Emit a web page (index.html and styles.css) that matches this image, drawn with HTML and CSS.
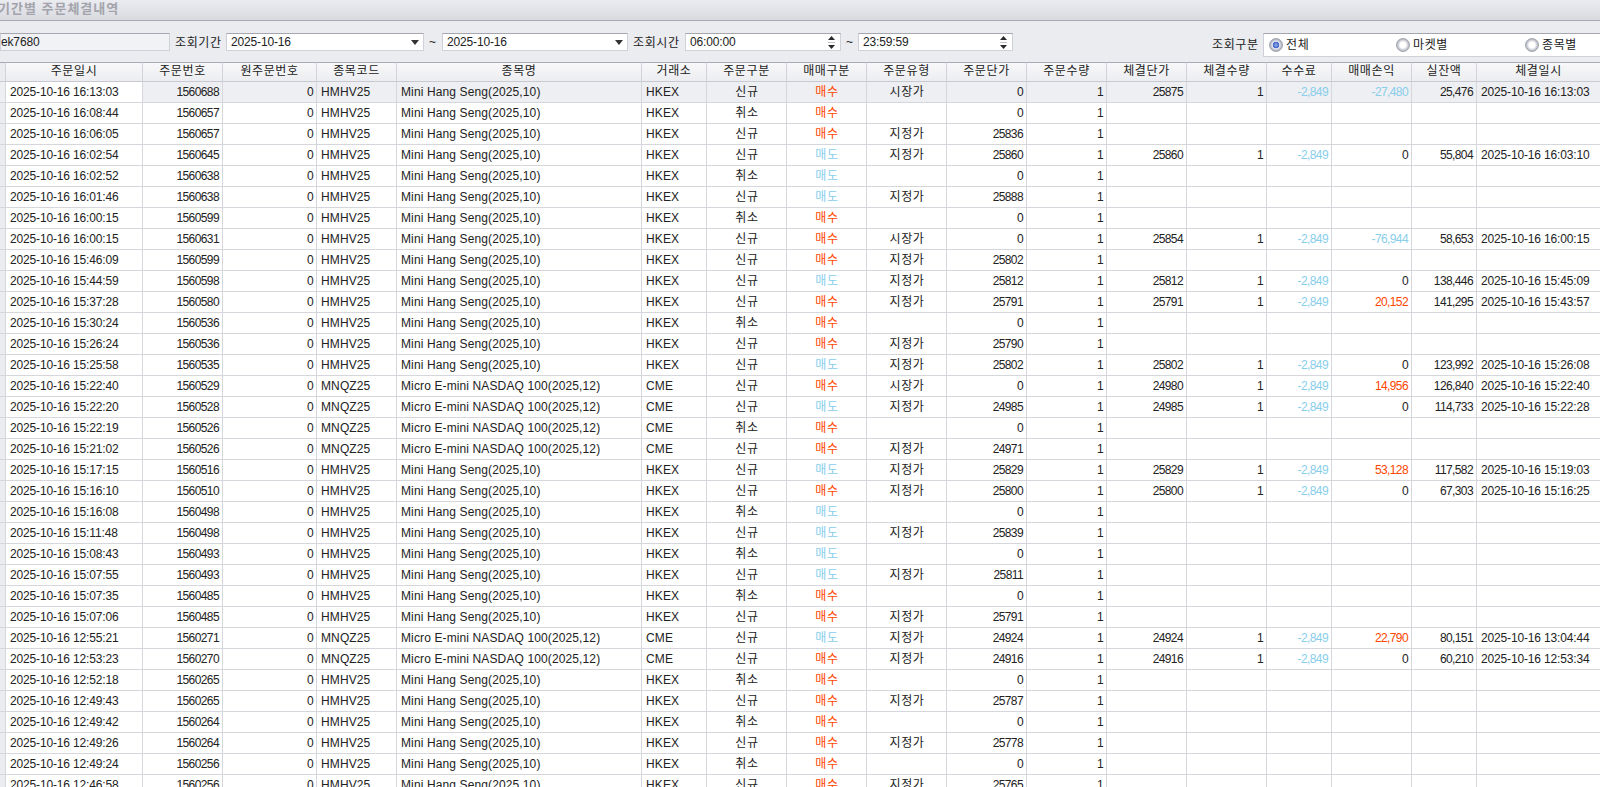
FILE: index.html
```html
<!DOCTYPE html>
<html lang="ko">

<head>
    <meta charset="UTF-8">
    <title>기간별 주문체결내역</title>
    <link rel="stylesheet" href="styles.css">
</head>

<body>
    <h1 class="title">기간별 주문체결내역</h1>

    <div class="bar">
        <div class="box account">ek7680</div>
        <span class="lbl">조회기간</span>
        <div class="box date-a">2025-10-16<i class="arrow"></i></div>
        <span class="tilde">~</span>
        <div class="box date-b">2025-10-16<i class="arrow"></i></div>
        <span class="lbl lbl-time">조회시간</span>
        <div class="box time">06:00:00<svg class="spin" viewBox="0 0 7 13"><path d="M3.5 0L7 4H0z"/><path class="spin-mid" d="M0 6h7v1H0z"/><path d="M0 9h7L3.5 13z"/></svg></div>
        <span class="tilde tilde-time">~</span>
        <div class="box time time-b">23:59:59<svg class="spin" viewBox="0 0 7 13"><path d="M3.5 0L7 4H0z"/><path class="spin-mid" d="M0 6h7v1H0z"/><path d="M0 9h7L3.5 13z"/></svg></div>
        <span class="lbl lbl-kind">조회구분</span>
        <div class="radios">
            <span class="opt opt-first"><i class="radio on"></i>전체</span>
            <span class="opt"><i class="radio"></i>마켓별</span>
            <span class="opt"><i class="radio"></i>종목별</span>
        </div>
    </div>

    <table class="grid">
        <colgroup>
            <col class="w6">
            <col class="w137">
            <col class="w80">
            <col class="w94">
            <col class="w80">
            <col class="w245">
            <col class="w65">
            <col class="w80">
            <col class="w80">
            <col class="w80">
            <col class="w80">
            <col class="w80">
            <col class="w80">
            <col class="w80">
            <col class="w65">
            <col class="w80">
            <col class="w65">
            <col class="w124">
        </colgroup>
        <thead>
            <tr><th></th><th>주문일시</th><th>주문번호</th><th>원주문번호</th><th>종목코드</th><th>종목명</th><th>거래소</th><th>주문구분</th><th>매매구분</th><th>주문유형</th><th>주문단가</th><th>주문수량</th><th>체결단가</th><th>체결수량</th><th>수수료</th><th>매매손익</th><th>실잔액</th><th>체결일시</th></tr>
        </thead>
        <tbody>
            <tr class="sel"><td></td><td class="focus">2025-10-16 16:13:03</td><td>1560688</td><td>0</td><td>HMHV25</td><td>Mini Hang Seng(2025,10)</td><td>HKEX</td><td>신규</td><td class="buy">매수</td><td>시장가</td><td>0</td><td>1</td><td>25875</td><td>1</td><td class="sell">-2,849</td><td class="sell">-27,480</td><td>25,476</td><td>2025-10-16 16:13:03</td></tr>
            <tr><td></td><td>2025-10-16 16:08:44</td><td>1560657</td><td>0</td><td>HMHV25</td><td>Mini Hang Seng(2025,10)</td><td>HKEX</td><td>취소</td><td class="buy">매수</td><td></td><td>0</td><td>1</td><td></td><td></td><td></td><td></td><td></td><td></td></tr>
            <tr><td></td><td>2025-10-16 16:06:05</td><td>1560657</td><td>0</td><td>HMHV25</td><td>Mini Hang Seng(2025,10)</td><td>HKEX</td><td>신규</td><td class="buy">매수</td><td>지정가</td><td>25836</td><td>1</td><td></td><td></td><td></td><td></td><td></td><td></td></tr>
            <tr><td></td><td>2025-10-16 16:02:54</td><td>1560645</td><td>0</td><td>HMHV25</td><td>Mini Hang Seng(2025,10)</td><td>HKEX</td><td>신규</td><td class="sell">매도</td><td>지정가</td><td>25860</td><td>1</td><td>25860</td><td>1</td><td class="sell">-2,849</td><td>0</td><td>55,804</td><td>2025-10-16 16:03:10</td></tr>
            <tr><td></td><td>2025-10-16 16:02:52</td><td>1560638</td><td>0</td><td>HMHV25</td><td>Mini Hang Seng(2025,10)</td><td>HKEX</td><td>취소</td><td class="sell">매도</td><td></td><td>0</td><td>1</td><td></td><td></td><td></td><td></td><td></td><td></td></tr>
            <tr><td></td><td>2025-10-16 16:01:46</td><td>1560638</td><td>0</td><td>HMHV25</td><td>Mini Hang Seng(2025,10)</td><td>HKEX</td><td>신규</td><td class="sell">매도</td><td>지정가</td><td>25888</td><td>1</td><td></td><td></td><td></td><td></td><td></td><td></td></tr>
            <tr><td></td><td>2025-10-16 16:00:15</td><td>1560599</td><td>0</td><td>HMHV25</td><td>Mini Hang Seng(2025,10)</td><td>HKEX</td><td>취소</td><td class="buy">매수</td><td></td><td>0</td><td>1</td><td></td><td></td><td></td><td></td><td></td><td></td></tr>
            <tr><td></td><td>2025-10-16 16:00:15</td><td>1560631</td><td>0</td><td>HMHV25</td><td>Mini Hang Seng(2025,10)</td><td>HKEX</td><td>신규</td><td class="buy">매수</td><td>시장가</td><td>0</td><td>1</td><td>25854</td><td>1</td><td class="sell">-2,849</td><td class="sell">-76,944</td><td>58,653</td><td>2025-10-16 16:00:15</td></tr>
            <tr><td></td><td>2025-10-16 15:46:09</td><td>1560599</td><td>0</td><td>HMHV25</td><td>Mini Hang Seng(2025,10)</td><td>HKEX</td><td>신규</td><td class="buy">매수</td><td>지정가</td><td>25802</td><td>1</td><td></td><td></td><td></td><td></td><td></td><td></td></tr>
            <tr><td></td><td>2025-10-16 15:44:59</td><td>1560598</td><td>0</td><td>HMHV25</td><td>Mini Hang Seng(2025,10)</td><td>HKEX</td><td>신규</td><td class="sell">매도</td><td>지정가</td><td>25812</td><td>1</td><td>25812</td><td>1</td><td class="sell">-2,849</td><td>0</td><td>138,446</td><td>2025-10-16 15:45:09</td></tr>
            <tr><td></td><td>2025-10-16 15:37:28</td><td>1560580</td><td>0</td><td>HMHV25</td><td>Mini Hang Seng(2025,10)</td><td>HKEX</td><td>신규</td><td class="buy">매수</td><td>지정가</td><td>25791</td><td>1</td><td>25791</td><td>1</td><td class="sell">-2,849</td><td class="buy">20,152</td><td>141,295</td><td>2025-10-16 15:43:57</td></tr>
            <tr><td></td><td>2025-10-16 15:30:24</td><td>1560536</td><td>0</td><td>HMHV25</td><td>Mini Hang Seng(2025,10)</td><td>HKEX</td><td>취소</td><td class="buy">매수</td><td></td><td>0</td><td>1</td><td></td><td></td><td></td><td></td><td></td><td></td></tr>
            <tr><td></td><td>2025-10-16 15:26:24</td><td>1560536</td><td>0</td><td>HMHV25</td><td>Mini Hang Seng(2025,10)</td><td>HKEX</td><td>신규</td><td class="buy">매수</td><td>지정가</td><td>25790</td><td>1</td><td></td><td></td><td></td><td></td><td></td><td></td></tr>
            <tr><td></td><td>2025-10-16 15:25:58</td><td>1560535</td><td>0</td><td>HMHV25</td><td>Mini Hang Seng(2025,10)</td><td>HKEX</td><td>신규</td><td class="sell">매도</td><td>지정가</td><td>25802</td><td>1</td><td>25802</td><td>1</td><td class="sell">-2,849</td><td>0</td><td>123,992</td><td>2025-10-16 15:26:08</td></tr>
            <tr><td></td><td>2025-10-16 15:22:40</td><td>1560529</td><td>0</td><td>MNQZ25</td><td>Micro E-mini NASDAQ 100(2025,12)</td><td>CME</td><td>신규</td><td class="buy">매수</td><td>시장가</td><td>0</td><td>1</td><td>24980</td><td>1</td><td class="sell">-2,849</td><td class="buy">14,956</td><td>126,840</td><td>2025-10-16 15:22:40</td></tr>
            <tr><td></td><td>2025-10-16 15:22:20</td><td>1560528</td><td>0</td><td>MNQZ25</td><td>Micro E-mini NASDAQ 100(2025,12)</td><td>CME</td><td>신규</td><td class="sell">매도</td><td>지정가</td><td>24985</td><td>1</td><td>24985</td><td>1</td><td class="sell">-2,849</td><td>0</td><td>114,733</td><td>2025-10-16 15:22:28</td></tr>
            <tr><td></td><td>2025-10-16 15:22:19</td><td>1560526</td><td>0</td><td>MNQZ25</td><td>Micro E-mini NASDAQ 100(2025,12)</td><td>CME</td><td>취소</td><td class="buy">매수</td><td></td><td>0</td><td>1</td><td></td><td></td><td></td><td></td><td></td><td></td></tr>
            <tr><td></td><td>2025-10-16 15:21:02</td><td>1560526</td><td>0</td><td>MNQZ25</td><td>Micro E-mini NASDAQ 100(2025,12)</td><td>CME</td><td>신규</td><td class="buy">매수</td><td>지정가</td><td>24971</td><td>1</td><td></td><td></td><td></td><td></td><td></td><td></td></tr>
            <tr><td></td><td>2025-10-16 15:17:15</td><td>1560516</td><td>0</td><td>HMHV25</td><td>Mini Hang Seng(2025,10)</td><td>HKEX</td><td>신규</td><td class="sell">매도</td><td>지정가</td><td>25829</td><td>1</td><td>25829</td><td>1</td><td class="sell">-2,849</td><td class="buy">53,128</td><td>117,582</td><td>2025-10-16 15:19:03</td></tr>
            <tr><td></td><td>2025-10-16 15:16:10</td><td>1560510</td><td>0</td><td>HMHV25</td><td>Mini Hang Seng(2025,10)</td><td>HKEX</td><td>신규</td><td class="buy">매수</td><td>지정가</td><td>25800</td><td>1</td><td>25800</td><td>1</td><td class="sell">-2,849</td><td>0</td><td>67,303</td><td>2025-10-16 15:16:25</td></tr>
            <tr><td></td><td>2025-10-16 15:16:08</td><td>1560498</td><td>0</td><td>HMHV25</td><td>Mini Hang Seng(2025,10)</td><td>HKEX</td><td>취소</td><td class="sell">매도</td><td></td><td>0</td><td>1</td><td></td><td></td><td></td><td></td><td></td><td></td></tr>
            <tr><td></td><td>2025-10-16 15:11:48</td><td>1560498</td><td>0</td><td>HMHV25</td><td>Mini Hang Seng(2025,10)</td><td>HKEX</td><td>신규</td><td class="sell">매도</td><td>지정가</td><td>25839</td><td>1</td><td></td><td></td><td></td><td></td><td></td><td></td></tr>
            <tr><td></td><td>2025-10-16 15:08:43</td><td>1560493</td><td>0</td><td>HMHV25</td><td>Mini Hang Seng(2025,10)</td><td>HKEX</td><td>취소</td><td class="sell">매도</td><td></td><td>0</td><td>1</td><td></td><td></td><td></td><td></td><td></td><td></td></tr>
            <tr><td></td><td>2025-10-16 15:07:55</td><td>1560493</td><td>0</td><td>HMHV25</td><td>Mini Hang Seng(2025,10)</td><td>HKEX</td><td>신규</td><td class="sell">매도</td><td>지정가</td><td>25811</td><td>1</td><td></td><td></td><td></td><td></td><td></td><td></td></tr>
            <tr><td></td><td>2025-10-16 15:07:35</td><td>1560485</td><td>0</td><td>HMHV25</td><td>Mini Hang Seng(2025,10)</td><td>HKEX</td><td>취소</td><td class="buy">매수</td><td></td><td>0</td><td>1</td><td></td><td></td><td></td><td></td><td></td><td></td></tr>
            <tr><td></td><td>2025-10-16 15:07:06</td><td>1560485</td><td>0</td><td>HMHV25</td><td>Mini Hang Seng(2025,10)</td><td>HKEX</td><td>신규</td><td class="buy">매수</td><td>지정가</td><td>25791</td><td>1</td><td></td><td></td><td></td><td></td><td></td><td></td></tr>
            <tr><td></td><td>2025-10-16 12:55:21</td><td>1560271</td><td>0</td><td>MNQZ25</td><td>Micro E-mini NASDAQ 100(2025,12)</td><td>CME</td><td>신규</td><td class="sell">매도</td><td>지정가</td><td>24924</td><td>1</td><td>24924</td><td>1</td><td class="sell">-2,849</td><td class="buy">22,790</td><td>80,151</td><td>2025-10-16 13:04:44</td></tr>
            <tr><td></td><td>2025-10-16 12:53:23</td><td>1560270</td><td>0</td><td>MNQZ25</td><td>Micro E-mini NASDAQ 100(2025,12)</td><td>CME</td><td>신규</td><td class="buy">매수</td><td>지정가</td><td>24916</td><td>1</td><td>24916</td><td>1</td><td class="sell">-2,849</td><td>0</td><td>60,210</td><td>2025-10-16 12:53:34</td></tr>
            <tr><td></td><td>2025-10-16 12:52:18</td><td>1560265</td><td>0</td><td>HMHV25</td><td>Mini Hang Seng(2025,10)</td><td>HKEX</td><td>취소</td><td class="buy">매수</td><td></td><td>0</td><td>1</td><td></td><td></td><td></td><td></td><td></td><td></td></tr>
            <tr><td></td><td>2025-10-16 12:49:43</td><td>1560265</td><td>0</td><td>HMHV25</td><td>Mini Hang Seng(2025,10)</td><td>HKEX</td><td>신규</td><td class="buy">매수</td><td>지정가</td><td>25787</td><td>1</td><td></td><td></td><td></td><td></td><td></td><td></td></tr>
            <tr><td></td><td>2025-10-16 12:49:42</td><td>1560264</td><td>0</td><td>HMHV25</td><td>Mini Hang Seng(2025,10)</td><td>HKEX</td><td>취소</td><td class="buy">매수</td><td></td><td>0</td><td>1</td><td></td><td></td><td></td><td></td><td></td><td></td></tr>
            <tr><td></td><td>2025-10-16 12:49:26</td><td>1560264</td><td>0</td><td>HMHV25</td><td>Mini Hang Seng(2025,10)</td><td>HKEX</td><td>신규</td><td class="buy">매수</td><td>지정가</td><td>25778</td><td>1</td><td></td><td></td><td></td><td></td><td></td><td></td></tr>
            <tr><td></td><td>2025-10-16 12:49:24</td><td>1560256</td><td>0</td><td>HMHV25</td><td>Mini Hang Seng(2025,10)</td><td>HKEX</td><td>취소</td><td class="buy">매수</td><td></td><td>0</td><td>1</td><td></td><td></td><td></td><td></td><td></td><td></td></tr>
            <tr><td></td><td>2025-10-16 12:46:58</td><td>1560256</td><td>0</td><td>HMHV25</td><td>Mini Hang Seng(2025,10)</td><td>HKEX</td><td>신규</td><td class="buy">매수</td><td>지정가</td><td>25765</td><td>1</td><td></td><td></td><td></td><td></td><td></td><td></td></tr>
        </tbody>
    </table>
</body>

</html>
```

FILE: styles.css
```css
* {
    margin: 0;
    padding: 0;
    box-sizing: border-box;
}

html,
body {
    height: 787px;
    overflow: hidden;
}

body {
    background: #ebecf0;
    color: #222;
    font-family: "Liberation Sans", "Noto Sans CJK KR", sans-serif;
    font-size: 12px;
}

.title {
    height: 21px;
    line-height: 17px;
    border-bottom: 1px solid #a9a9b5;
    background: linear-gradient(#ebecf0, #d9dae0);
    color: #a3a4ac;
    font-size: 13px;
    font-weight: 700;
    letter-spacing: 1px;
    text-indent: -2px;
    white-space: nowrap;
}

.bar {
    display: flex;
    align-items: flex-start;
    gap: 5px;
    height: 41px;
    padding-top: 12px;
}

.lbl {
    width: 46px;
    line-height: 21px;
    letter-spacing: 0.6px;
    white-space: nowrap;
}

.lbl-time {
    width: 47px;
}

.lbl-kind {
    margin-left: auto;
    line-height: 24px;
}

.tilde {
    width: 8px;
    line-height: 18px;
}

.tilde-time {
    width: 7px;
}

.box {
    position: relative;
    height: 18px;
    line-height: 16px;
    padding-left: 4px;
    background: #fff;
    border: 1px solid #d0d1d8;
    border-top-color: #a5a6b0;
    letter-spacing: -0.15px;
}

.account {
    width: 170px;
    padding-left: 0;
    background: #f1f2f5;
}

.date-a {
    width: 198px;
}

.date-b {
    width: 186px;
}

.time {
    width: 156px;
}

.time-b {
    width: 155px;
}

.arrow {
    position: absolute;
    top: 6px;
    right: 4px;
    border: 4px solid transparent;
    border-top: 5px solid #333;
    border-bottom: 0;
}

.spin {
    position: absolute;
    top: 2px;
    right: 5px;
    width: 7px;
    height: 13px;
    fill: #2a2a2a;
}

.spin-mid {
    fill: #c4c5cc;
}

.radios {
    display: flex;
    flex: none;
    align-items: center;
    width: 337px;
    height: 24px;
    padding-left: 5px;
    background: #fff;
    border: 1px solid #d0d1d8;
    border-top-color: #a5a6b0;
    border-right: 0;
}

.opt {
    display: flex;
    flex: none;
    align-items: center;
    gap: 3px;
    width: 129px;
    padding-bottom: 3px;
    letter-spacing: 0.6px;
}

.opt-first {
    width: 127px;
}

.radio {
    width: 14px;
    height: 14px;
    margin-top: 3px;
    border-radius: 50%;
    border: 1px solid #a4a6b0;
    background: radial-gradient(circle, #fff 0 3px, #f1f1f4 3.5px, #b4b6bf 6px);
}

.radio.on {
    background: radial-gradient(circle, #7f9be0 0 1px, #3f63c8 3px, #e6e9f3 3.6px, #a9adba 6px);
}

.grid {
    width: 1600px;
    table-layout: fixed;
    border-collapse: separate;
    border-spacing: 0;
    background: #fff;
}

.w6 { width: 6px; }
.w65 { width: 65px; }
.w80 { width: 80px; }
.w94 { width: 94px; }
.w124 { width: 124px; }
.w137 { width: 137px; }
.w245 { width: 245px; }

th {
    height: 20px;
    padding-bottom: 2px;
    border-top: 1px solid #a9a9b5;
    border-right: 1px solid #d2d3da;
    border-bottom: 1px solid #c8c9d1;
    background: linear-gradient(#f8f8fa, #ecedf0);
    font-weight: 400;
    line-height: 16px;
    letter-spacing: 0.6px;
    overflow: hidden;
}

td {
    height: 21px;
    padding: 0 3px 0 4px;
    border-right: 1px solid #d6d6dd;
    border-bottom: 1px solid #d6d6dd;
    line-height: 20px;
    white-space: nowrap;
    overflow: hidden;
    text-align: right;
    letter-spacing: -0.6px;
}

th:first-child,
td:first-child {
    background: #ebecf0;
    padding: 0;
}

td:nth-child(2),
td:nth-child(18) {
    text-align: left;
    letter-spacing: -0.15px;
}

td:nth-child(5),
td:nth-child(6),
td:nth-child(7) {
    text-align: left;
    letter-spacing: 0.12px;
}

td:nth-child(8),
td:nth-child(9),
td:nth-child(10) {
    text-align: center;
    letter-spacing: 0.6px;
}

.sel td {
    background: #eeeff2;
}

.sel .focus {
    background: #fff;
}

td.buy {
    color: #ff4500;
}

td.sell {
    color: #87ceeb;
}
```
